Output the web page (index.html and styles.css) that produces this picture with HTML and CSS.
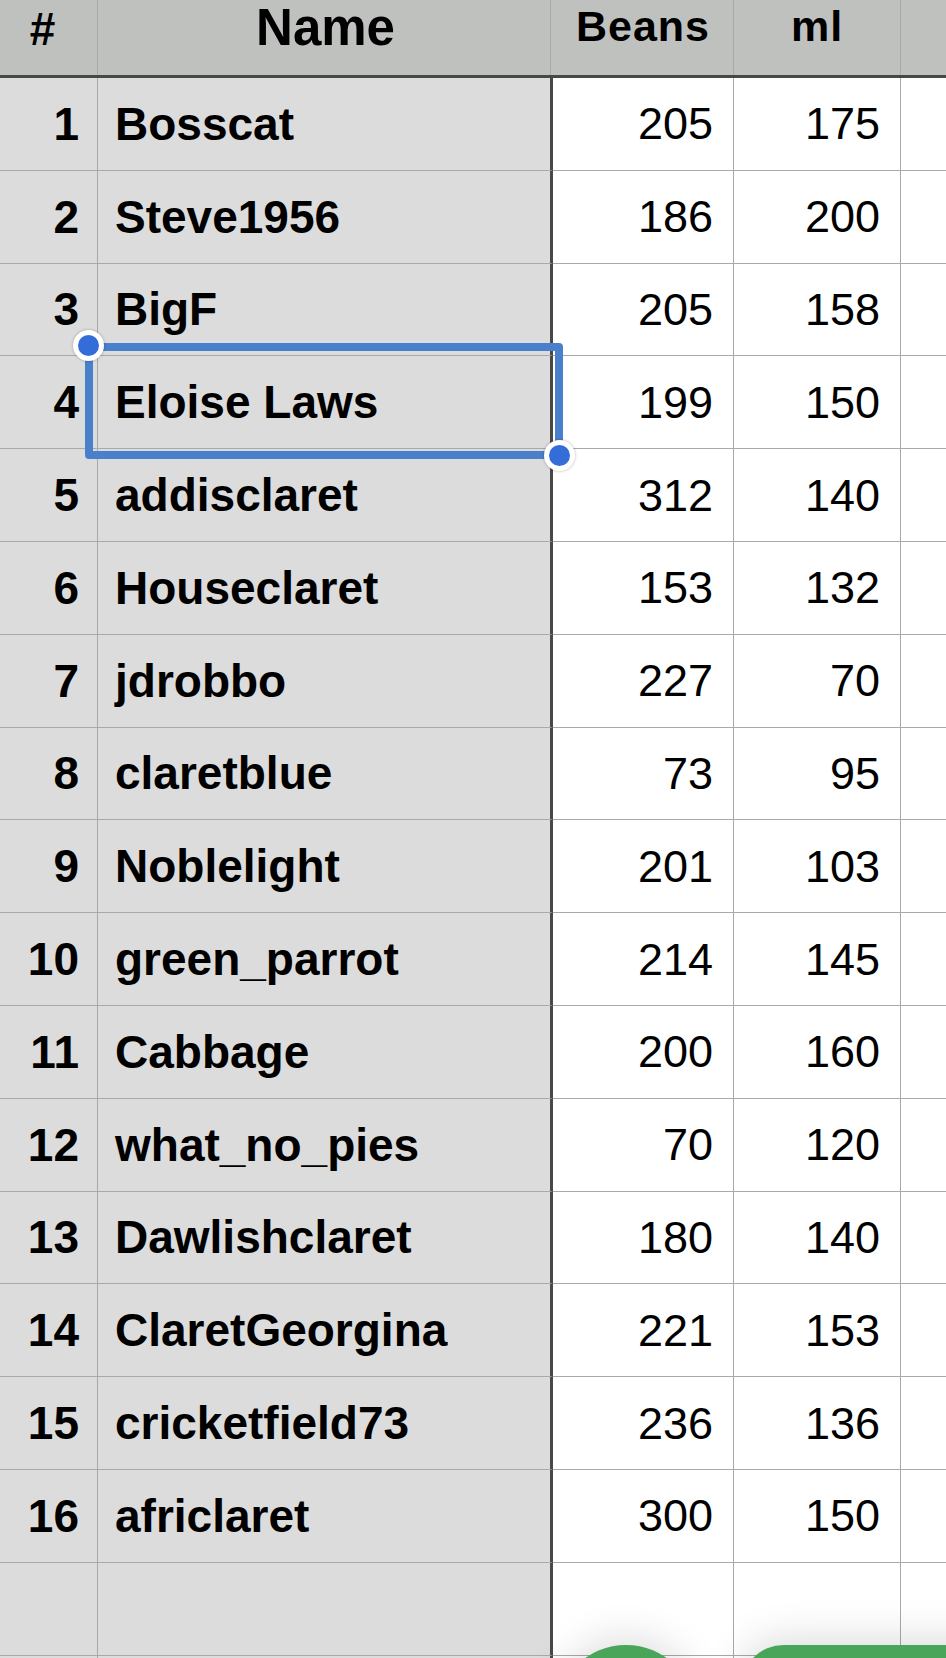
FILE: index.html
```html
<!DOCTYPE html>
<html>
<head>
<meta charset="utf-8">
<link rel="stylesheet" href="styles.css">
</head>
<body>
<div class="screen">
  <div class="sheet">
    <div class="h h-num">#</div>
    <div class="h h-name">Name</div>
    <div class="h h-val">Beans</div>
    <div class="h h-val">ml</div>
    <div class="h h-pad"></div>
    <div class="rule"></div>

    <div class="c c-num">1</div><div class="c c-name">Bosscat</div><div class="c c-val">205</div><div class="c c-val">175</div><div class="c c-pad"></div>
    <div class="c c-num">2</div><div class="c c-name">Steve1956</div><div class="c c-val">186</div><div class="c c-val">200</div><div class="c c-pad"></div>
    <div class="c c-num">3</div><div class="c c-name">BigF</div><div class="c c-val">205</div><div class="c c-val">158</div><div class="c c-pad"></div>
    <div class="c c-num">4</div><div class="c c-name">Eloise Laws</div><div class="c c-val">199</div><div class="c c-val">150</div><div class="c c-pad"></div>
    <div class="c c-num">5</div><div class="c c-name">addisclaret</div><div class="c c-val">312</div><div class="c c-val">140</div><div class="c c-pad"></div>
    <div class="c c-num">6</div><div class="c c-name">Houseclaret</div><div class="c c-val">153</div><div class="c c-val">132</div><div class="c c-pad"></div>
    <div class="c c-num">7</div><div class="c c-name">jdrobbo</div><div class="c c-val">227</div><div class="c c-val">70</div><div class="c c-pad"></div>
    <div class="c c-num">8</div><div class="c c-name">claretblue</div><div class="c c-val">73</div><div class="c c-val">95</div><div class="c c-pad"></div>
    <div class="c c-num">9</div><div class="c c-name">Noblelight</div><div class="c c-val">201</div><div class="c c-val">103</div><div class="c c-pad"></div>
    <div class="c c-num">10</div><div class="c c-name">green_parrot</div><div class="c c-val">214</div><div class="c c-val">145</div><div class="c c-pad"></div>
    <div class="c c-num">11</div><div class="c c-name">Cabbage</div><div class="c c-val">200</div><div class="c c-val">160</div><div class="c c-pad"></div>
    <div class="c c-num">12</div><div class="c c-name">what_no_pies</div><div class="c c-val">70</div><div class="c c-val">120</div><div class="c c-pad"></div>
    <div class="c c-num">13</div><div class="c c-name">Dawlishclaret</div><div class="c c-val">180</div><div class="c c-val">140</div><div class="c c-pad"></div>
    <div class="c c-num">14</div><div class="c c-name">ClaretGeorgina</div><div class="c c-val">221</div><div class="c c-val">153</div><div class="c c-pad"></div>
    <div class="c c-num">15</div><div class="c c-name">cricketfield73</div><div class="c c-val">236</div><div class="c c-val">136</div><div class="c c-pad"></div>
    <div class="c c-num">16</div><div class="c c-name">africlaret</div><div class="c c-val">300</div><div class="c c-val">150</div><div class="c c-pad"></div>
    <div class="c c-num"></div><div class="c c-name"></div><div class="c c-val"></div><div class="c c-val"></div><div class="c c-pad"></div>
    <div class="c c-num"></div><div class="c c-name"></div><div class="c c-val"></div><div class="c c-val"></div><div class="c c-pad"></div>
  </div>

  <div class="selection">
    <span class="handle handle-tl"></span>
    <span class="handle handle-br"></span>
  </div>

  <div class="fab fab-round"></div>
  <div class="fab fab-pill"></div>
</div>
</body>
</html>
```

FILE: styles.css
```css
html, body {
  margin: 0;
  padding: 0;
  background: #ffffff;
}

.screen {
  position: relative;
  width: 946px;
  height: 1658px;
  overflow: hidden;
  font-family: "Liberation Sans", Arial, sans-serif;
  color: #000;
}

.sheet {
  display: grid;
  grid-template-columns: 98px 455px 181px 167px 1fr;
  grid-template-rows: 75px 3px;
  grid-auto-rows: 92.8px;
}

/* header */
.h {
  background: #bfc1bf;
  box-sizing: border-box;
  border-right: 1px solid #a8aaa8;
  display: flex;
  justify-content: center;
  align-items: flex-start;
  font-weight: bold;
  line-height: 1;
}

.h-num {
  font-size: 46px;
  padding-top: 6px;
  padding-right: 12px;
}

.h-name {
  font-size: 51px;
  padding-top: 2px;
  border-right: none;
  box-shadow: inset -2px 0 0 #bfc1bf, inset -3px 0 0 #a8aaa8;
}

.h-val {
  font-size: 43px;
  letter-spacing: 1px;
  padding-top: 5px;
}

.h-pad {
  border-right: none;
}

.rule {
  grid-column: 1 / -1;
  background: #474847;
}

/* body cells */
.c {
  box-sizing: border-box;
  border-right: 1px solid #a9a9a9;
  border-bottom: 1px solid #a9a9a9;
  display: flex;
  align-items: center;
  line-height: 1;
  white-space: nowrap;
}

.c-num {
  background: #dcdcdc;
  justify-content: flex-end;
  padding-right: 18px;
  font-weight: bold;
  font-size: 46px;
}

.c-name {
  background: #dcdcdc;
  border-right: 3px solid #474847;
  padding-left: 17px;
  font-weight: bold;
  font-size: 46px;
}

.c-val {
  background: #ffffff;
  justify-content: flex-end;
  padding-right: 20px;
  font-size: 45px;
}

.c-pad {
  background: #ffffff;
  border-right: none;
}

/* selection overlay */
.selection {
  position: absolute;
  left: 85px;
  top: 343px;
  width: 478px;
  height: 116px;
  box-sizing: border-box;
  border: 8px solid #4a7fcc;
  border-radius: 4px;
}

.handle {
  position: absolute;
  width: 21px;
  height: 21px;
  border-radius: 50%;
  background: #356dd8;
  border: 5.5px solid #ffffff;
  box-shadow: 0 0 3px rgba(0, 0, 0, 0.3);
}

.handle-tl {
  left: -20px;
  top: -21px;
}

.handle-br {
  right: -20px;
  bottom: -20px;
}

/* floating buttons */
.fab {
  position: absolute;
  background: #48a55a;
  box-shadow: 0 -6px 40px rgba(0, 0, 0, 0.14);
}

.fab-round {
  left: 556px;
  top: 1645px;
  width: 140px;
  height: 140px;
  border-radius: 50%;
}

.fab-pill {
  left: 740px;
  top: 1645px;
  width: 320px;
  height: 100px;
  border-radius: 44px;
}
```
